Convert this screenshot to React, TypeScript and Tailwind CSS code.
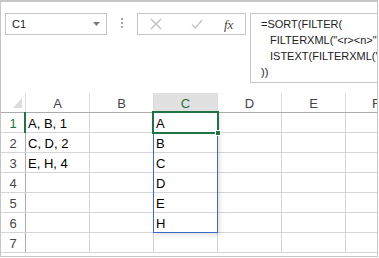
import React from "react";

const cols = ["A", "B", "C", "D", "E"];
const data: string[][] = [
  ["A, B, 1", "", "A", "", ""],
  ["C, D, 2", "", "B", "", ""],
  ["E, H, 4", "", "C", "", ""],
  ["", "", "D", "", ""],
  ["", "", "E", "", ""],
  ["", "", "H", "", ""],
  ["", "", "", "", ""],
];

export default function App() {
  return (
    <div
      className="relative w-[379px] h-[258px] bg-white overflow-hidden"
      style={{ fontFamily: '"Liberation Sans", Arial, sans-serif' }}
    >
      <div className="w-[378px] h-[257px] border-l border-r border-b border-t-2 border-[#c6c6c6] overflow-hidden">
        {/* formula bar area */}
        <div className="flex items-start pt-[11px] pl-[4px]">
          <div className="w-[102px] h-[22px] border border-[#c6c6c6] flex items-center justify-between pl-[6px] pr-[6px]">
            <span className="text-[11px] text-[#222] leading-none pt-[1px]">C1</span>
            <svg width="7" height="4" viewBox="0 0 7 4">
              <path d="M0 0 L7 0 L3.5 4 Z" fill="#7a7a7a" />
            </svg>
          </div>
          <div className="ml-[14px] mt-[5px] flex flex-col gap-[2px]">
            <div className="w-[2px] h-[2px] bg-[#a6a6a6]" />
            <div className="w-[2px] h-[2px] bg-[#a6a6a6]" />
            <div className="w-[2px] h-[2px] bg-[#a6a6a6]" />
          </div>
          <div className="ml-[14px] w-[109px] h-[22px] border border-[#c6c6c6] flex items-center">
            <svg width="12" height="12" viewBox="0 0 12 12" className="ml-[12px]">
              <path d="M1 1 L11 11 M11 1 L1 11" stroke="#c2c2c2" strokeWidth="1.4" />
            </svg>
            <svg width="12" height="10" viewBox="0 0 12 10" className="ml-[29px]">
              <path d="M1 5.5 L4.5 9 L11 1" stroke="#c8c8c8" strokeWidth="1.6" fill="none" />
            </svg>
            <span
              className="ml-[21px] text-[13px] italic text-[#444] leading-none"
              style={{ fontFamily: '"Liberation Serif", "Times New Roman", serif' }}
            >
              fx
            </span>
          </div>
          <div className="ml-[4px] flex-1 h-[70px] border-t border-l border-b border-[#c6c6c6] overflow-hidden pl-[10px] pt-[2px] text-[11px] leading-[16px] text-[#222] whitespace-nowrap">
            <div>=SORT(FILTER(</div>
            <div className="pl-[9px]">FILTERXML("&lt;r&gt;&lt;n&gt;" &amp; SUBSTITUTE(TEXTJOIN</div>
            <div className="pl-[9px]">ISTEXT(FILTERXML("&lt;r&gt;&lt;n&gt;"</div>
            <div>))</div>
          </div>
        </div>

        {/* grid */}
        <div className="mt-[10px] text-[13px]">
          <div className="flex h-[20px] border-b border-[#ababab]">
            <div className="relative w-[25px] shrink-0 border-r border-[#dadada]">
              <svg width="9" height="10" viewBox="0 0 9 10" className="absolute right-[3px] bottom-[4px]">
                <path d="M9 0 L9 10 L0 10 Z" fill="#dcdcdc" />
              </svg>
            </div>
            {cols.map((c) => (
              <div
                key={c}
                className={`w-[64px] shrink-0 border-r border-[#dadada] text-center leading-[20px] pt-[1px] ${
                  c === "C" ? "bg-[#e1e1e1] text-[#217346]" : "text-[#444]"
                }`}
              >
                {c}
              </div>
            ))}
            <div className="flex-1 text-[#444] leading-[20px] pt-[1px] pl-[26px]">F</div>
          </div>
          {data.map((row, i) => (
            <div key={i} className="flex h-[20px] border-b border-[#d4d4d4]">
              <div
                className={`w-[25px] shrink-0 border-r border-[#ababab] text-center leading-[20px] pt-[1px] ${
                  i === 0 ? "text-[#217346]" : "text-[#444]"
                }`}
              >
                {i + 1}
              </div>
              {row.map((v, j) => (
                <div
                  key={j}
                  className="w-[64px] shrink-0 border-r border-[#d4d4d4] pl-[2px] leading-[20px] pt-[1px] text-black whitespace-nowrap overflow-hidden"
                >
                  {v}
                </div>
              ))}
              <div className="flex-1" />
            </div>
          ))}
        </div>
      </div>

      {/* row header selection marker */}
      <div className="absolute left-[24px] top-[112px] w-[2px] h-[21px] bg-[#217346]" />
      {/* spill range */}
      <div className="absolute left-[153px] top-[112px] w-[65px] h-[121px] border border-[#3a6cc6] shadow-[2px_2px_4px_rgba(0,0,0,0.12)]" />
      {/* active cell */}
      <div className="absolute left-[152px] top-[111px] w-[67px] h-[23px] border-2 border-[#217346]" />
      <div className="absolute left-[215px] top-[130px] w-[6px] h-[6px] bg-[#217346] border border-white" />
    </div>
  );
}
